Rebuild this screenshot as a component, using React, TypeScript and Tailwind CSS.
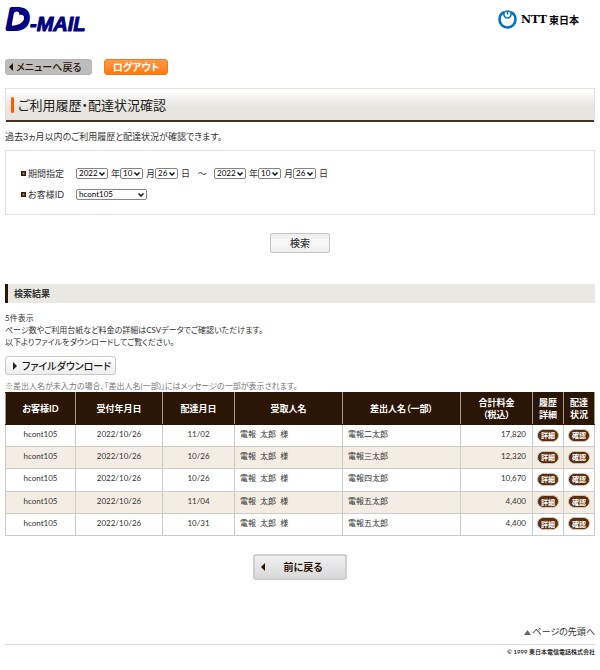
import type { ReactNode } from "react"
import { clsx } from "clsx"

interface Delivery {
  customerId: string
  acceptedOn: string
  deliveredOn: string
  recipient: string
  sender: string
  total: number
}

const DELIVERIES: Delivery[] = [
  { customerId: "hcont105", acceptedOn: "2022/10/26", deliveredOn: "11/02", recipient: "電報 太郎 様", sender: "電報二太郎", total: 17820 },
  { customerId: "hcont105", acceptedOn: "2022/10/26", deliveredOn: "10/26", recipient: "電報 太郎 様", sender: "電報三太郎", total: 12320 },
  { customerId: "hcont105", acceptedOn: "2022/10/26", deliveredOn: "10/26", recipient: "電報 太郎 様", sender: "電報四太郎", total: 10670 },
  { customerId: "hcont105", acceptedOn: "2022/10/26", deliveredOn: "11/04", recipient: "電報 太郎 様", sender: "電報五太郎", total: 4400 },
  { customerId: "hcont105", acceptedOn: "2022/10/26", deliveredOn: "10/31", recipient: "電報 太郎 様", sender: "電報五太郎", total: 4400 },
]

function DMailLogo() {
  return (
    <svg width="88" height="28" viewBox="0 0 88 28" role="img" aria-label="D-MAIL" className="overflow-visible fill-[#000080]">
      <text x="2" y="23" fontSize="30" stroke="#000080" strokeWidth="4" strokeLinejoin="round" className="font-['Liberation_Sans'] font-bold italic">D</text>
      {/* heart over the closed bowl */}
      <ellipse cx="13" cy="13" rx="8" ry="8" />
      <path d="M8.800 7.500 C9.500 4.800 14 4.800 14.300 7.500 V9.200 C17 8 19.500 9.800 19 12.500 C18.500 16.500 14 19 8 19.700 C7 19.700 6.700 19 6.900 18Z" fill="#fff" />
      <text x="25" y="25" fontSize="20" stroke="#000080" strokeWidth="1" className="font-['Liberation_Sans'] font-bold italic">-MAIL</text>
    </svg>
  )
}

function NttLogo() {
  return (
    <div className="flex items-center gap-1">
      <svg width="19" height="19" viewBox="0 0 19 19" fill="none" stroke="#0071c5" aria-hidden="true">
        <path d="M6.200 2.200 C2.800 3.500 1.500 6.300 1.500 9.300 C1.500 14 5 17.500 9.500 17.500 C14 17.500 17.500 14 17.500 9.300 C17.500 6.300 16.200 3.500 12.800 2.200" strokeWidth="2.600" />
        <path d="M6 2.400 C8 0.800 11 0.800 13 2.400" strokeWidth="1.600" />
        <path d="M6 2.600 C5.500 6 7 8 9.500 8 C12 8 13.500 6 13 2.600 M9.500 2 V4.500" strokeWidth="1.500" />
      </svg>
      <span className="flex items-center gap-0.5 leading-4 font-bold text-black">
        <span className="font-['DejaVu_Serif'] text-[11px]">NTT</span>
        <span className="text-[10px]">東日本</span>
      </span>
    </div>
  )
}

function Caret({ left = false }: { left?: boolean }) {
  return (
    <svg width="4" height="8" viewBox="0 0 4 8" fill="currentColor" aria-hidden="true">
      <path d={left ? "M4 0 L0 4 L4 8Z" : "M0 0 L4 4 L0 8Z"} />
    </svg>
  )
}

function SelectBox({ label, options, className, id }: { label: string; options: string[]; className: string; id?: string }) {
  return (
    <span className={clsx("relative inline-flex", className)}>
      <select
        id={id}
        aria-label={label}
        className="h-[11px] w-full appearance-none rounded-[2px] border border-[#858585] bg-white pl-[2px] font-['Lato','Noto_Sans_CJK_JP',sans-serif] text-[8px] leading-[9px] text-black"
      >
        {options.map((o) => (
          <option key={o}>{o}</option>
        ))}
      </select>
      <svg className="pointer-events-none absolute top-[4px] right-[3px]" width="6" height="4" viewBox="0 0 6 4" fill="none" stroke="#111" strokeWidth="1.500" aria-hidden="true">
        <path d="M0.500 0.500 L3 3 L5.500 0.500" />
      </svg>
    </span>
  )
}

function DateFields({ prefix }: { prefix: string }) {
  return (
    <span className="flex items-center">
      <SelectBox label={`${prefix} 年`} options={["2022", "2021"]} className="mr-[3px] w-8" />
      年
      <SelectBox label={`${prefix} 月`} options={["10", "11", "12"]} className="mr-[3px] w-[23px]" />
      月
      <SelectBox label={`${prefix} 日`} options={["26", "27", "28"]} className="mr-[3px] w-[23px]" />
      日
    </span>
  )
}

function FieldLabel({ children }: { children: ReactNode }) {
  return (
    <span className="flex w-[55px] shrink-0 items-center gap-[2px]">
      <svg width="5" height="5" viewBox="0 0 5 5" aria-hidden="true">
        <path d="M0 0h5v5h-5z" fill="#32190a" />
        <path d="M1.500 1.500h2v2h-2z" fill="#c48a50" />
      </svg>
      {children}
    </span>
  )
}

function PillButton({ children }: { children: ReactNode }) {
  return (
    <button
      type="button"
      className="mt-[2px] h-[13px] w-[22px] rounded-full border border-[#d2c4b6] bg-[#5a2d0c] align-middle text-[7px] leading-[10px] font-bold text-white"
    >
      {children}
    </button>
  )
}

export default function App() {
  return (
    <div className="bg-white px-[5px] pb-3 font-['Lato','Noto_Sans_CJK_JP',sans-serif] text-[9px] leading-3 text-[#333] [font-feature-settings:'palt']">
      <header className="flex items-start justify-between pt-[6px] pr-4">
        <DMailLogo />
        <div className="pt-1">
          <NttLogo />
        </div>
      </header>

      <nav className="mt-[25px] flex gap-3">
        <button type="button" className="flex h-4 w-[87px] items-center gap-[3px] rounded-[3px] border border-[#b5b5b5] bg-[#bdbdbd] pl-[3px] text-[10px] font-medium text-[#2b1505]">
          <Caret left />
          メニューへ戻る
        </button>
        <button type="button" className="h-4 w-16 rounded-[3px] border border-[#f07a20] bg-linear-to-b from-[#ff9a45] to-[#ff7800] text-[10px] leading-3 font-bold text-white">
          ログアウト
        </button>
      </nav>

      <main>
        <div className="mt-[13px] border border-b-0 border-[#e2e2e2]">
          <h1 className="flex h-[33px] items-center gap-1 border-b-2 border-[#4b3323] bg-linear-to-b from-white to-[#e6e5e0] to-60% pl-[5px] text-[13px] text-[#222]">
            <span className="h-4 w-[3px] rounded-full bg-[#ff5a00]" />
            ご利用履歴・配達状況確認
          </h1>
        </div>

        <p className="mt-[9px]">過去3ヵ月以内のご利用履歴と配達状況が確認できます。</p>

        <form onSubmit={(e) => e.preventDefault()}>
          <div className="mt-[7px] space-y-2 border border-[#e2e2e2] pt-4 pr-4 pb-[13px] pl-[15px]">
            <div className="flex items-center leading-[13px]">
              <FieldLabel>期間指定</FieldLabel>
              <DateFields prefix="開始" />
              <span className="w-6 text-center">〜</span>
              <DateFields prefix="終了" />
            </div>
            <div className="flex items-center leading-[13px]">
              <FieldLabel>
                <label htmlFor="customer-id">お客様ID</label>
              </FieldLabel>
              <SelectBox id="customer-id" label="お客様ID" options={["hcont105"]} className="w-[71px]" />
            </div>
          </div>
          <div className="mt-[18px] text-center">
            <button type="submit" className="h-5 w-[60px] rounded-[2px] border border-[#c4c4c4] bg-linear-to-b from-[#ededed] via-[#fafafa] to-[#ededed] align-top text-[10px] font-medium">
              検索
            </button>
          </div>
        </form>

        <h2 className="mt-[31px] h-[19px] border-l-[3px] border-[#2b1505] bg-[#e9e8e2] pl-[6px] text-[9px] leading-[19px] font-bold text-[#333]">
          検索結果
        </h2>

        <p className="mt-[9px] text-[8px]">
          5件表示
          <br />
          ページ数やご利用台紙など料金の詳細はCSVデータでご確認いただけます。
          <br />
          以下よりファイルをダウンロードしてご覧ください。
        </p>

        <button type="button" className="mt-2 flex h-[19px] w-[111px] items-center gap-[5px] rounded-[3px] border border-[#c9c9c9] bg-linear-to-b from-white to-[#ededed] pl-[7px] text-[10px] font-medium text-[#222]">
          <Caret />
          ファイルダウンロード
        </button>
        <p className="mt-[5px] text-[8px] text-[#777]">※差出人名が未入力の場合、「差出人名(一部)」にはメッセージの一部が表示されます。</p>

        <table className="h-36 w-full table-fixed border-collapse text-[8px] leading-3 [&_td]:border [&_td]:border-[#ccc] [&_td]:p-0 [&_td]:pb-[3px] [&_th]:border [&_th]:border-y-[#2b1505] [&_th]:border-x-[#a59a92] [&_th]:p-0">
          <colgroup>
            <col className="w-[70px]" />
            <col className="w-[87px]" />
            <col className="w-[72px]" />
            <col className="w-[108px]" />
            <col />
            <col className="w-[72px]" />
            <col className="w-[31px]" />
            <col className="w-[31px]" />
          </colgroup>
          <thead>
            <tr className="h-8 bg-[#2b1505] text-[9px] text-white">
              <th>お客様ID</th>
              <th>受付年月日</th>
              <th>配達月日</th>
              <th>受取人名</th>
              <th>差出人名（一部）</th>
              <th>合計料金<br />（税込）</th>
              <th>履歴<br />詳細</th>
              <th>配達<br />状況</th>
            </tr>
          </thead>
          <tbody>
            {DELIVERIES.map((d, i) => (
              <tr key={i} className={i % 2 ? "bg-[#f3ede3]" : "bg-white"}>
                <td className="text-center">{d.customerId}</td>
                <td className="text-center">{d.acceptedOn}</td>
                <td className="text-center">{d.deliveredOn}</td>
                <td>
                  <span className="pl-[5px] whitespace-pre">{d.recipient.replaceAll(" ", "  ")}</span>
                </td>
                <td>
                  <span className="pl-[5px]">{d.sender}</span>
                </td>
                <td className="text-right">
                  <span className="pr-[6px]">{d.total.toLocaleString("en-US")}</span>
                </td>
                <td className="text-center">
                  <PillButton>詳細</PillButton>
                </td>
                <td className="text-center">
                  <PillButton>確認</PillButton>
                </td>
              </tr>
            ))}
          </tbody>
        </table>

        <div className="mt-[18px] text-center">
          <button type="button" className="inline-flex h-[26px] w-[94px] items-center rounded-[3px] border-2 border-[#cfcfcf] bg-linear-to-b from-[#f0f0f0] to-[#d9d9d9] pl-[6px] align-top text-[10px] font-bold text-[#2b1505]">
            <Caret left />
            <span className="grow pr-1">前に戻る</span>
          </button>
        </div>
      </main>

      <footer className="mt-[46px] text-right">
        <a href="#root" className="inline-flex items-center gap-[2px] align-top text-[9px]">
          <svg width="7" height="5" viewBox="0 0 7 5" fill="#666" aria-hidden="true">
            <path d="M3.500 0 L7 5 H0Z" />
          </svg>
          ページの先頭へ
        </a>
        <p className="mt-[6px] border-t border-[#ddd] pt-px text-[6px] font-medium text-black">© 1999 東日本電信電話株式会社</p>
      </footer>
    </div>
  )
}
